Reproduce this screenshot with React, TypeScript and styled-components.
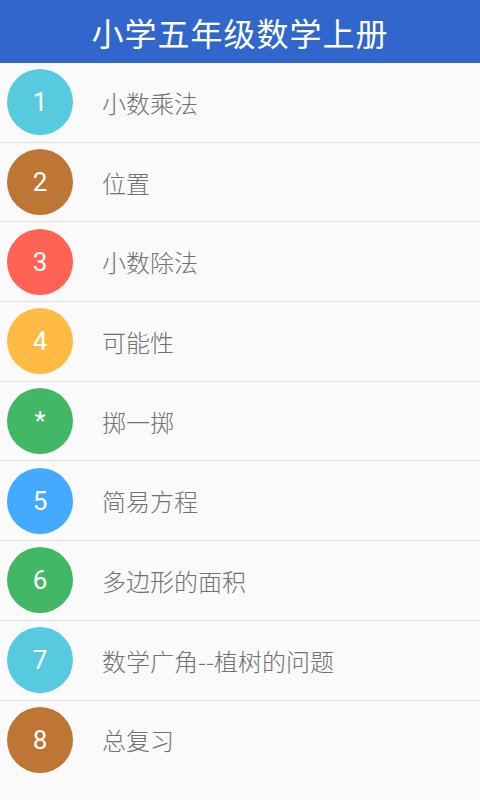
import React from 'react';
import styled, { createGlobalStyle } from 'styled-components';

const GlobalStyle = createGlobalStyle`
  html, body {
    margin: 0;
    padding: 0;
    background: #fafafa;
  }
  body {
    font-family: 'Noto Sans CJK SC', 'Roboto', sans-serif;
  }
`;

const Page = styled.div`
  width: 480px;
  min-height: 800px;
  background: #fafafa;
  display: flex;
  flex-direction: column;
`;

const Header = styled.header`
  height: 63px;
  background: #3166cc;
  display: flex;
  align-items: center;
  justify-content: center;
  flex-shrink: 0;
`;

const Title = styled.h1`
  margin: 0;
  color: #fff;
  font-size: 32px;
  font-weight: 400;
  letter-spacing: 1px;
  font-family: 'Noto Sans CJK SC', sans-serif;
  line-height: 1;
`;

const List = styled.ul`
  list-style: none;
  margin: 0;
  padding: 0;
`;

const Row = styled.li<{ $last?: boolean }>`
  height: 78.7px;
  display: flex;
  align-items: center;
  padding-left: 7px;
  border-bottom: ${p => (p.$last ? 'none' : '1px solid #e2e2e2')};
`;

const Badge = styled.div<{ $color: string }>`
  width: 66px;
  height: 66px;
  border-radius: 50%;
  background: ${p => p.$color};
  color: #fff;
  display: flex;
  align-items: center;
  justify-content: center;
  font-family: 'Roboto', sans-serif;
  font-size: 26px;
  font-weight: 400;
  flex-shrink: 0;
`;

const Label = styled.span`
  margin-left: 29px;
  font-size: 24px;
  font-weight: 300;
  color: #717171;
  font-family: 'Noto Sans CJK SC', sans-serif;
`;

const items = [
  { n: '1', text: '小数乘法', color: '#56cbdf' },
  { n: '2', text: '位置', color: '#bd7634' },
  { n: '3', text: '小数除法', color: '#ff6354' },
  { n: '4', text: '可能性', color: '#ffbb44' },
  { n: '*', text: '掷一掷', color: '#42b866' },
  { n: '5', text: '简易方程', color: '#44aaff' },
  { n: '6', text: '多边形的面积', color: '#42b866' },
  { n: '7', text: '数学广角--植树的问题', color: '#56cbdf' },
  { n: '8', text: '总复习', color: '#bd7634' },
];

const App = () => {
  return (
    <Page>
      <GlobalStyle />
      <Header>
        <Title>小学五年级数学上册</Title>
      </Header>
      <List>
        {items.map((item, i) => (
          <Row key={i} $last={i === items.length - 1}>
            <Badge $color={item.color}>{item.n}</Badge>
            <Label>{item.text}</Label>
          </Row>
        ))}
      </List>
    </Page>
  );
};

export default App;
